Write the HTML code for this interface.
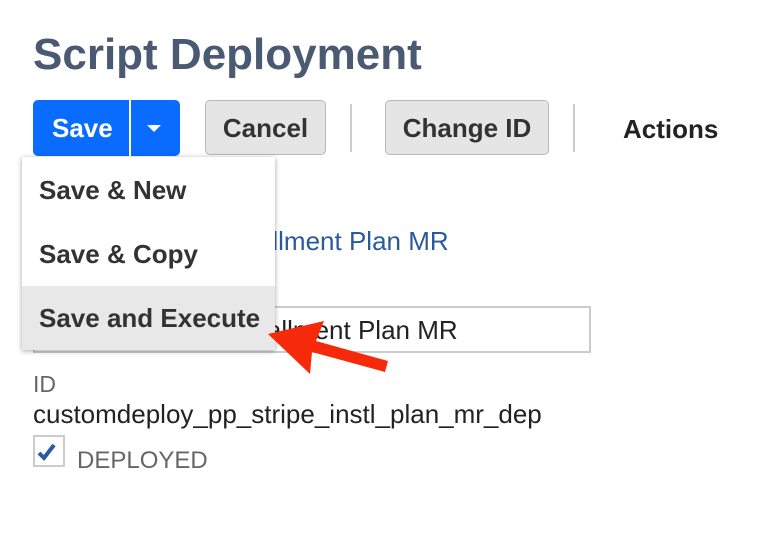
<!DOCTYPE html>
<html><head><style>
body{margin:0;width:762px;height:540px;background:#fff;font-family:"Liberation Sans",Arial,sans-serif;position:relative;overflow:hidden}
.a{position:absolute;white-space:nowrap}
h1{position:absolute;left:33px;top:30px;margin:0;font-size:44px;font-weight:bold;color:#4a5a73}
.btn{position:absolute;top:100px;height:55px;border:1px solid #b8b8b8;border-radius:5px;background:#e5e5e5;font-weight:bold;font-size:26px;color:#333;text-align:center;line-height:55px;box-sizing:border-box}
.sep{position:absolute;top:104px;width:2px;height:48px;background:#ccc}
.menu{position:absolute;left:22px;top:157px;width:253px;height:193px;background:#fff;box-shadow:0 1px 5px rgba(0,0,0,.35)}
.mi{position:absolute;left:17px;font-weight:bold;font-size:26px;color:#333}
</style></head><body>
<h1>Script Deployment</h1>
<div class="a" style="left:33px;top:100px;width:147px;height:56px;background:#0a6cff;border-radius:5px"></div>
<div class="a" style="left:129px;top:100px;width:2px;height:56px;background:#fff"></div>
<div class="a" style="left:52px;top:113px;font-size:26px;font-weight:bold;color:#fff">Save</div>
<div class="a" style="left:147px;top:125px;width:0;height:0;border-left:7px solid transparent;border-right:7px solid transparent;border-top:7px solid #fff"></div>
<div class="btn" style="left:205px;width:121px">Cancel</div>
<div class="sep" style="left:350px"></div>
<div class="btn" style="left:385px;width:164px">Change ID</div>
<div class="sep" style="left:573px"></div>
<div class="a" style="left:623px;top:114px;font-size:26px;font-weight:bold;color:#222">Actions</div>
<div class="a" style="left:216px;top:226px;font-size:26px;color:#2a5a9a">Installment Plan MR</div>
<div class="a" style="left:33px;top:306px;width:558px;height:47px;border:2px solid #ccc;box-sizing:border-box"></div>
<div class="a" style="left:225px;top:315px;font-size:26px;color:#222">Installment Plan MR</div>
<div class="menu">
<div class="mi" style="top:18px">Save &amp; New</div>
<div class="mi" style="top:82px">Save &amp; Copy</div>
<div style="position:absolute;left:0;top:129px;width:253px;height:64px;background:#e8e8e8"></div>
<div class="mi" style="top:146px">Save and Execute</div>
</div>
<svg class="a" style="left:0;top:0" width="762" height="540"><polygon points="268,334 324,321 316,341 388,361 385,372 312,352 310,374" fill="#f62a0a"/></svg>
<div class="a" style="left:33px;top:371px;font-size:23px;color:#666">ID</div>
<div class="a" style="left:33px;top:399px;font-size:26px;color:#222">customdeploy_pp_stripe_instl_plan_mr_dep</div>
<div class="a" style="left:33px;top:435px;width:32px;height:32px;border:2px solid #ccc;box-sizing:border-box"></div>
<svg class="a" style="left:36px;top:440px" width="26" height="22"><path d="M3 13 L8 18 L18 5" stroke="#2a5aa0" stroke-width="4" fill="none"/></svg>
<div class="a" style="left:77px;top:447px;font-size:24px;color:#666">DEPLOYED</div>
</body></html>
